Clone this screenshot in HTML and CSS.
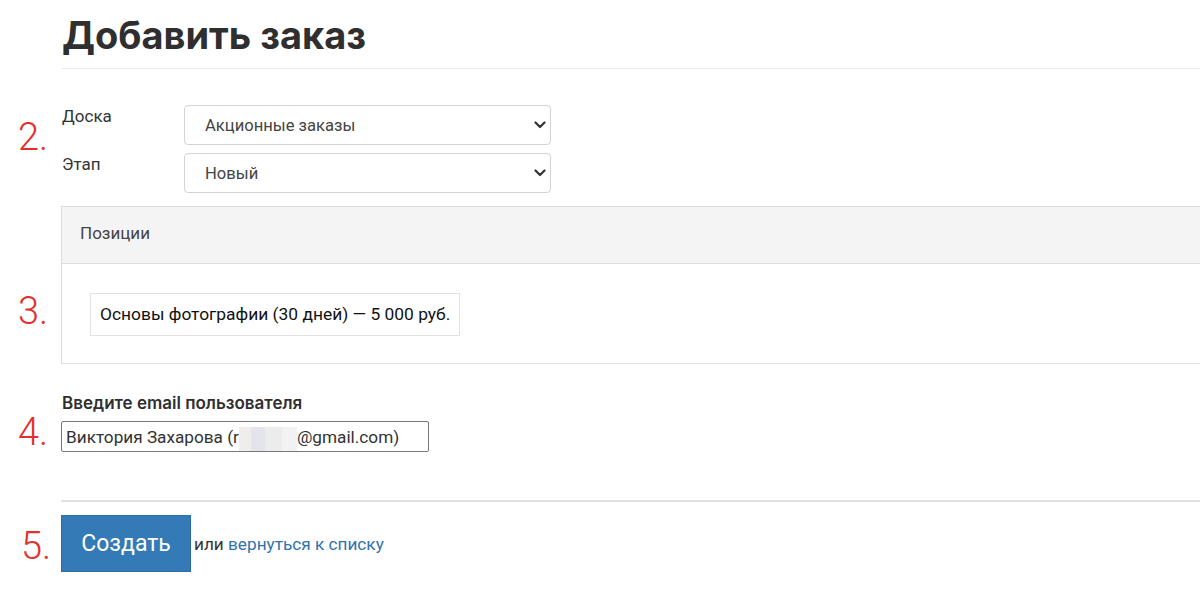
FILE: index.html
```html
<!DOCTYPE html>
<html lang="ru">

<head>
  <meta charset="UTF-8">
  <meta name="viewport" content="width=device-width, initial-scale=1.0">
  <title>Добавить заказ</title>

  <link rel="stylesheet" href="styles.css">
</head>

<body>
  <main class="page">
    <header class="page-head">
      <h1>Добавить заказ</h1>
    </header>

    <section class="step step-board">
      <span class="step-num">2.</span>
      <div class="fields">
        <div class="field">
          <label>Доска</label>
          <div class="select">
            <span>Акционные заказы</span>
            <svg width="12" height="8" viewBox="0 0 12 8"><path d="M1.5 1.5 6 6l4.5-4.5" fill="none" stroke="#333" stroke-width="2.2" stroke-linecap="round" stroke-linejoin="round"/></svg>
          </div>
        </div>
        <div class="field">
          <label>Этап</label>
          <div class="select">
            <span>Новый</span>
            <svg width="12" height="8" viewBox="0 0 12 8"><path d="M1.5 1.5 6 6l4.5-4.5" fill="none" stroke="#333" stroke-width="2.2" stroke-linecap="round" stroke-linejoin="round"/></svg>
          </div>
        </div>
      </div>
    </section>

    <section class="step step-items">
      <span class="step-num">3.</span>
      <div class="panel">
        <div class="panel-head">Позиции</div>
        <div class="panel-body">
          <div class="item">Основы фотографии (30 дней) — 5 000 руб.</div>
        </div>
      </div>
    </section>

    <section class="step step-email">
      <span class="step-num">4.</span>
      <div class="email">
        <label class="email-label">Введите email пользователя</label>
        <div class="email-input">
          <span>Виктория Захарова (r</span><span class="blur"></span><span>@gmail.com)</span>
        </div>
      </div>
    </section>

    <section class="step step-submit">
      <span class="step-num">5.</span>
      <div class="actions">
        <button class="btn-create">Создать</button>
        <span class="back">или <a href="#">вернуться к списку</a></span>
      </div>
    </section>
  </main>
</body>

</html>
```

FILE: styles.css
```css
body {
  background: #fff;
  color: #333;
  font-family: Roboto, "Liberation Sans", sans-serif;
  font-size: 17px;
  margin: 0;
  overflow: hidden;
}

.page {
  width: 1200px;
}

.page-head {
  border-bottom: 1px solid #ececec;
  margin-left: 61px;
  padding: 12px 0 10px;
}

.page-head h1 {
  color: #2f2f2f;
  font-family: Inter, "Liberation Sans", sans-serif;
  font-size: 38px;
  font-weight: 700;
  line-height: 46px;
  margin: 0;
  padding-left: 1px;
}

.step {
  display: grid;
  grid-template-columns: 61px 1fr;
}

.step-num {
  color: #e3302a;
  font-family: Roboto, "Liberation Sans", sans-serif;
  font-size: 38px;
  font-weight: 300;
  line-height: 38px;
  padding-left: 18px;
}

/* step 2 */
.step-board {
  margin-top: 36px;
}

.step-board .step-num {
  margin-top: 13px;
}

.fields {
  display: flex;
  flex-direction: column;
  gap: 8px;
}

.field {
  display: flex;
}

.field label {
  color: #333;
  line-height: 22px;
  padding-left: 1px;
  width: 122px;
}

.select {
  align-items: center;
  background: #fff;
  border: 1px solid #d3d3d3;
  border-radius: 4px;
  box-sizing: border-box;
  color: #444;
  display: flex;
  font-size: 16.6px;
  height: 40px;
  justify-content: space-between;
  padding: 0 4px 0 20px;
  width: 367px;
}

/* step 3 */
.step-items {
  margin-top: 13px;
}

.step-items .step-num {
  margin-top: 86px;
}

.panel {
  border: 1px solid #ddd;
  margin-right: -20px;
}

.panel-head {
  background: #f4f4f4;
  border-bottom: 1px solid #ddd;
  color: #444;
  height: 56px;
  line-height: 53px;
  padding-left: 18px;
}

.panel-body {
  box-sizing: border-box;
  height: 99px;
  padding: 29px 0 0 28px;
}

.item {
  border: 1px solid #e2e2e2;
  box-sizing: border-box;
  color: #111;
  display: inline-block;
  font-size: 17.4px;
  height: 43px;
  line-height: 41px;
  padding: 0 9px;
}

/* step 4 */
.step-email {
  margin-top: 28px;
}

.step-email .step-num {
  margin-top: 21px;
}

.email-label {
  color: #2f2f2f;
  display: block;
  font-family: Inter, "Liberation Sans", sans-serif;
  font-size: 17px;
  font-weight: 600;
  line-height: 22px;
  padding-left: 1px;
}

.email-input {
  align-items: center;
  border: 1px solid #777;
  border-radius: 2px;
  box-sizing: border-box;
  color: #333;
  display: flex;
  font-size: 17.2px;
  height: 31px;
  margin-top: 7px;
  padding-left: 4px;
  width: 368px;
}

.blur {
  background: linear-gradient(90deg, #f1eded 0 20%, #e3e5ea 20% 45%, #ececec 45% 75%, #f2f2f2 75%);
  display: inline-block;
  height: 24px;
  margin-top: 4px;
  width: 58px;
}

/* step 5 */
.step-submit {
  margin-top: 48px;
}

.step-submit .step-num {
  margin-top: 27px;
  padding-left: 21px;
}

.actions {
  align-items: center;
  border-top: 2px solid #e0e0e0;
  display: flex;
  margin-right: -20px;
  padding-top: 13px;
}

.btn-create {
  background: #337ab7;
  border: 1px solid #2e6da4;
  color: #fff;
  cursor: pointer;
  font-family: Roboto, "Liberation Sans", sans-serif;
  font-size: 23px;
  height: 57px;
  padding: 0;
  width: 130px;
}

.back {
  color: #333;
  font-size: 17.2px;
  margin-left: 3px;
}

.back a {
  color: #2f72ae;
  text-decoration: none;
}
```
